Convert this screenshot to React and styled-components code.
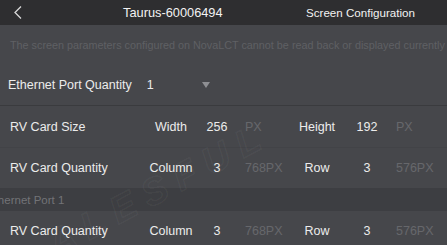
import React from "react";
import styled, { createGlobalStyle } from "styled-components";

const Global = createGlobalStyle`
  html, body { margin: 0; padding: 0; background: #46474b; }
  * { box-sizing: border-box; }
`;

const Page = styled.div`
  position: relative;
  width: 447px;
  height: 245px;
  overflow: hidden;
  background: #46474b;
  font-family: "Liberation Sans", Arial, sans-serif;
  color: #ececec;
`;

const Header = styled.header`
  display: grid;
  grid-template-columns: 123px 183px 1fr;
  align-items: center;
  height: 25px;
  background: #2e2e30;
`;

const Back = styled.div`
  display: flex;
  align-items: center;
  padding-left: 13px;
`;

const Title = styled.div`
  color: #f2f2f2;
  font-size: ${(p) => p.$size}px;
  white-space: nowrap;
`;

const Notice = styled.div`
  display: flex;
  align-items: center;
  height: 39px;
  padding-left: 10px;
  font-size: 10.8px;
  color: #5f6064;
  white-space: nowrap;
`;

const Row = styled.div`
  display: grid;
  grid-template-columns: 141px 60px 32px 54px 60px 40px 1fr;
  align-items: center;
  height: ${(p) => p.$h}px;
  border-bottom: 1px solid ${(p) => p.$line || "transparent"};
  font-size: 12.5px;
`;

const SelectRow = styled.div`
  display: flex;
  align-items: center;
  height: 42px;
  padding-left: 8px;
  border-bottom: 1px solid #3a3b3e;
  font-size: 12.5px;
`;

const Label = styled.div`
  padding-left: 10px;
  white-space: nowrap;
`;

const Center = styled.div`
  text-align: center;
`;

const Unit = styled.div`
  padding-left: ${(p) => p.$indent}px;
  color: #66676b;
`;

const SelectValue = styled.div`
  margin-left: 15px;
  width: 55px;
`;

const Caret = styled.div`
  width: 0;
  height: 0;
  border-left: 4.5px solid transparent;
  border-right: 4.5px solid transparent;
  border-top: 6px solid #8e8f93;
`;

const Section = styled.div`
  display: flex;
  align-items: center;
  height: 23px;
  background: #3d3e42;
  color: #727377;
  font-size: 11.5px;
`;

const SectionText = styled.span`
  margin-left: -13px;
`;

const Watermark = styled.div`
  position: absolute;
  left: 40px;
  top: 228px;
  transform: rotate(-28deg);
  transform-origin: left top;
  font-size: 38px;
  font-weight: bold;
  font-style: italic;
  letter-spacing: 10px;
  color: transparent;
  -webkit-text-stroke: 1.5px rgba(255, 255, 255, 0.045);
  pointer-events: none;
  white-space: nowrap;
`;

const DimRow = ({ label, a, av, au, b, bv, bu, h, line }) => (
  <Row $h={h} $line={line}>
    <Label>{label}</Label>
    <Center>{a}</Center>
    <Center>{av}</Center>
    <Unit $indent={12}>{au}</Unit>
    <Center>{b}</Center>
    <Center>{bv}</Center>
    <Unit $indent={9}>{bu}</Unit>
  </Row>
);

export default function App() {
  return (
    <Page>
      <Global />
      <Header>
        <Back>
          <svg width="10" height="15" viewBox="0 0 10 15">
            <path d="M8 1.5 L2 7.5 L8 13.5" fill="none" stroke="#d8d8d8" strokeWidth="1.3" />
          </svg>
        </Back>
        <Title $size={12.8}>Taurus-60006494</Title>
        <Title $size={11.6}>Screen Configuration</Title>
      </Header>
      <Notice>The screen parameters configured on NovaLCT cannot be read back or displayed currently</Notice>
      <SelectRow>
        <span>Ethernet Port Quantity</span>
        <SelectValue>1</SelectValue>
        <Caret />
      </SelectRow>
      <DimRow h={42} line="#424347" label="RV Card Size" a="Width" av="256" au="PX" b="Height" bv="192" bu="PX" />
      <DimRow h={40} label="RV Card Quantity" a="Column" av="3" au="768PX" b="Row" bv="3" bu="576PX" />
      <Section>
        <SectionText>Ethernet Port 1</SectionText>
      </Section>
      <DimRow h={40} label="RV Card Quantity" a="Column" av="3" au="768PX" b="Row" bv="3" bu="576PX" />
      <Watermark>ALESFUL</Watermark>
    </Page>
  );
}
